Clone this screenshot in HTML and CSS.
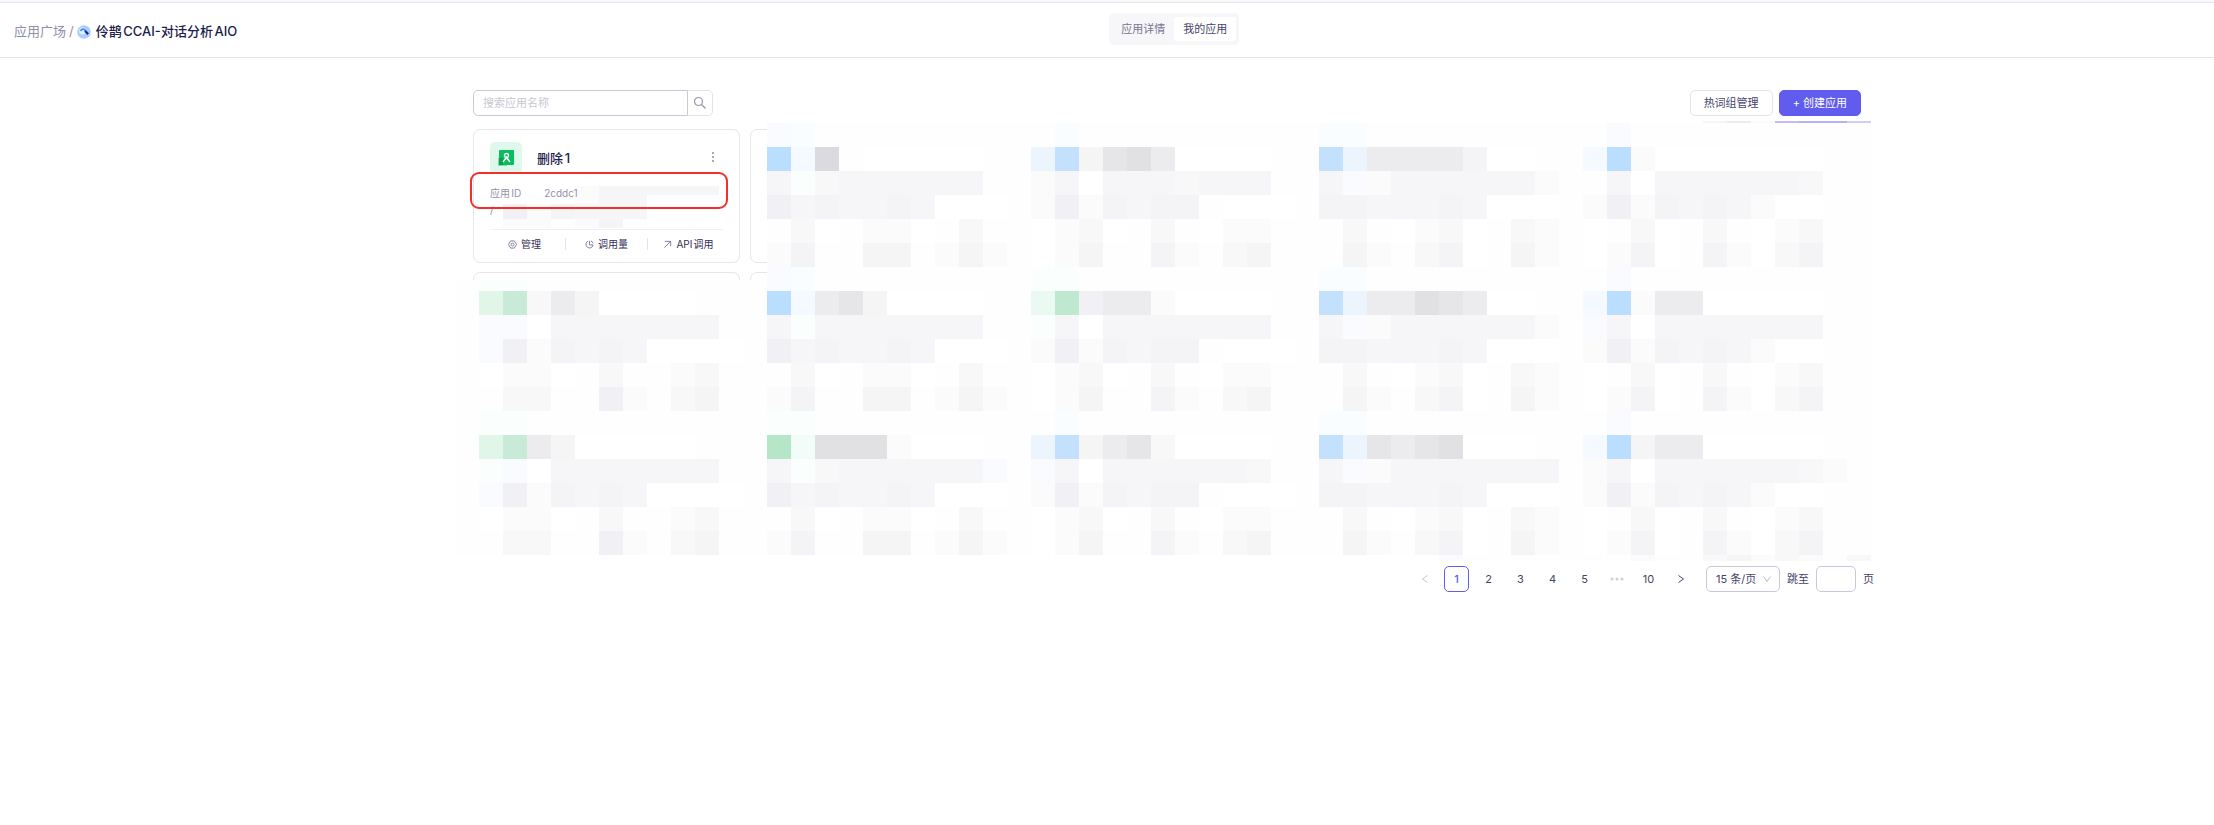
FILE: index.html
```html
<!DOCTYPE html>
<html lang="zh-CN">
<head>
<meta charset="utf-8">
<title>伶鹊CCAI-对话分析AIO</title>
<link rel="stylesheet" href="styles.css">
</head>
<body>
<header class="topbar">
  <nav class="crumbs">
    <a class="crumb-link" href="#">应用广场</a><span class="crumb-sep">/</span>
    <svg class="logo" viewBox="0 0 14 14" aria-hidden="true"><circle cx="7" cy="7" r="6.8" fill="#a9ceff"/><circle cx="5.6" cy="6" r="3.4" fill="#e4f1ff"/><path d="M3.600 6C5 3.200 8 4 8.600 6.200L11.200 8.600" fill="none" stroke="#3f8bf8" stroke-width="1.800"/><path d="M8 6L11.200 9.200" stroke="#142f86" stroke-width="2"/></svg>
    <span class="crumb-current">伶鹊CCAI-对话分析AIO</span>
  </nav>
  <div class="tabs">
    <button class="tab" type="button">应用详情</button>
    <button class="tab tab-active" type="button">我的应用</button>
  </div>
</header>
<main class="page">
  <div class="toolbar">
    <form class="search">
      <input class="search-input" type="text" placeholder="搜索应用名称" aria-label="搜索应用名称">
      <button class="search-button" type="button" aria-label="搜索"><svg class="icon-search" viewBox="0 0 14 14"><circle cx="5.500" cy="5.500" r="4" /><path d="M8.500 8.500L12.500 12.500"/></svg></button>
    </form>
    <div class="actions">
      <button class="button" type="button">热词组管理</button>
      <button class="button button-primary" type="button">+ 创建应用</button>
    </div>
  </div>
  <section class="board">
    <div class="cards">
      <article class="card">
        <div class="card-head">
          <svg class="app-icon" viewBox="0 0 32 32" aria-hidden="true"><rect width="32" height="32" rx="5" fill="#dff8ec"/><rect x="8" y="16" width="9" height="8" fill="#80dfac"/><rect x="9" y="8" width="15" height="15" rx="1" fill="#08bd5b"/><path d="M9 16h4v7H9z" fill="#0b9f50"/><circle cx="16.500" cy="13.500" r="2" fill="none" stroke="#fff" stroke-width="1.400"/><path d="M13 20L16.500 15.500L20 20M16.500 15.500V17" fill="none" stroke="#fff" stroke-width="1.400"/></svg>
          <h2 class="card-title">删除1</h2>
          <button class="more" type="button" aria-label="更多"><svg class="icon-more" viewBox="0 0 4 12"><path d="M1 1h2v2H1zM1 5h2v2H1zM1 9h2v2H1z"/></svg></button>
        </div>
        <div class="card-id"><span class="id-label">应用ID</span><span>2cddc1</span></div>
        <div class="card-note">/</div>
        <div class="card-actions">
          <button class="card-action card-action-first" type="button"><svg class="icon" viewBox="0 0 10 10"><path d="M3 1h4L9.500 5L7 9H3L.5 5z"/><circle cx="5" cy="5" r="1.600"/></svg>管理</button>
          <button class="card-action card-action-mid" type="button"><svg class="icon" viewBox="0 0 10 10"><path d="M3.500 1.200A4 4 0 1 0 9 5.500H5V1M6.500 1A4 4 0 0 1 9 3.800"/></svg>调用量</button>
          <button class="card-action card-action-last" type="button"><svg class="icon" viewBox="0 0 10 10"><path d="M1.500 8.500L8.500 1.500M2 1.500H8.500V7"/></svg>API调用</button>
        </div>
      </article>
      <article class="card"></article>
      <article class="card"></article>
      <article class="card"></article>
    </div>
    <div class="mosaic" id="mosaic" aria-hidden="true"></div>
    <div class="id-mask" id="id-mask" aria-hidden="true"></div>
    <div class="highlight" aria-hidden="true"></div>
  </section>
  <nav class="pager" aria-label="分页">
    <button class="page-button page-prev" type="button" aria-label="上一页"><svg class="icon" viewBox="0 0 10 10"><path d="M7.500 1.500L2.500 5L7.500 8.500"/></svg></button>
    <button class="page-button page-current" type="button">1</button>
    <button class="page-button" type="button">2</button>
    <button class="page-button" type="button">3</button>
    <button class="page-button" type="button">4</button>
    <button class="page-button" type="button">5</button>
    <span class="page-button"><svg class="icon-dots" viewBox="0 0 14 4"><circle cx="2" cy="2" r="1.500"/><circle cx="7" cy="2" r="1.500"/><circle cx="12" cy="2" r="1.500"/></svg></span>
    <button class="page-button" type="button">10</button>
    <button class="page-button" type="button" aria-label="下一页"><svg class="icon" viewBox="0 0 10 10"><path d="M2.500 1.500L7.500 5L2.500 8.500"/></svg></button>
    <div class="size">
      <select class="size-select" aria-label="每页条数"><option>15 条/页</option></select>
      <svg class="icon size-arrow" viewBox="0 0 10 10"><path d="M1.500 2.500L5 7.500L8.500 2.500"/></svg>
    </div>
    <label class="jump">跳至<input class="jump-input" type="text">页</label>
  </nav>
</main>
<script src="mosaic.js"></script>
</body>
</html>
```
FILE: styles.css
```css
* { box-sizing: border-box; }
body {
  margin: 0;
  background: #fff;
  color: #46436a;
  font: 11px/16px Inter, "Noto Sans CJK SC", sans-serif;
  text-autospace: normal;
}
button, input, select { margin: 0; padding: 0; border: 0; background: none; color: inherit; font: inherit; }
svg { display: block; flex: none; }
.icon { width: 10px; height: 10px; fill: none; stroke: currentColor; stroke-width: 1; }

.topbar {
  display: grid;
  grid-template-columns: 114fr auto 100fr;
  align-items: center;
  height: 58px;
  padding: 0 14px;
  border-top: 2px solid #f7f8fc;
  border-bottom: 1px solid #e3e4ea;
  box-shadow: inset 0 1px #e5e6ee;
}
.crumbs { display: flex; align-items: center; padding-top: 2px; font-size: 13px; line-height: 20px; }
.crumb-link { color: #918fa8; text-decoration: none; }
.crumb-sep { margin: 0 3px; color: #918fa8; }
.logo { width: 14px; height: 14px; margin: 2px 5px 0 0; }
.crumb-current { color: #201c4c; font-weight: 500; }
.tabs {
  display: flex;
  margin-bottom: 2px;
  padding: 4px 3px;
  border-radius: 5px;
  background: #f7f7fa;
}
.tab { height: 24px; padding: 0 9px; color: #77748f; }
.tab-active { border-radius: 3px; background: #fff; color: #46436a; }

.page { padding: 32px 340px 40px 473px; }
.toolbar { display: flex; justify-content: space-between; padding-right: 13px; }
.search { display: flex; height: 26px; }
.search-input { width: 215px; padding: 0 9px; border: 1px solid #c9c7db; border-radius: 5px 0 0 5px; }
.search-input::placeholder { color: #c8c7d1; }
.search-button {
  display: flex;
  align-items: center;
  justify-content: center;
  width: 25px;
  border: 1px solid #e4e3ec;
  border-left: 0;
  border-radius: 0 5px 5px 0;
}
.icon-search { width: 14px; height: 14px; fill: none; stroke: #9694aa; stroke-width: 1.2; }
.actions { display: flex; gap: 6px; }
.button { height: 26px; padding: 0 13px; border: 1px solid #e4e3ec; border-radius: 5px; }
.button-primary { border-color: #615ced; background: #615ced; color: #fff; }

.board { position: relative; height: 432px; margin-top: 13px; }
.cards { display: grid; grid-template-columns: repeat(2, 267px); gap: 9px 10px; }
.card { height: 134px; padding: 12px 16px 0; border: 1px solid #e6e5ee; border-radius: 7px; }
.card-head { display: flex; align-items: center; height: 32px; }
.app-icon { width: 32px; height: 32px; }
.card-title { flex: 1; margin: 0 0 0 15px; color: #201c4c; font-size: 13px; font-weight: 500; line-height: 20px; }
.more { padding: 0 8px 2px; }
.icon-more { width: 4px; height: 12px; fill: #aaa8ba; }
.card-id {
  position: relative;
  z-index: 1;
  display: flex;
  gap: 23px;
  margin-top: 11px;
  color: #9391ac;
  font-size: 10px;
}
.card-note { height: 18px; padding-top: 1px; color: #9391ac; font-size: 10px; }
.card-actions {
  display: grid;
  grid-template-columns: 75px 1fr 75px;
  margin-top: 10px;
  padding-top: 8px;
  border-top: 1px solid #f0f0f4;
}
.card-action {
  display: flex;
  align-items: center;
  justify-content: center;
  gap: 4px;
  height: 12px;
  color: #353158;
  font-size: 10px;
  white-space: nowrap;
}
.card-action .icon { width: 9px; height: 9px; color: #77748f; }
.card-action-first { padding-right: 6px; }
.card-action-mid { border: solid #e4e3ec; border-width: 0 1px; }
.card-action-last { padding-left: 6px; }

.mosaic { position: absolute; top: -8px; left: -18px; }
.mosaic-row { display: flex; }
.cell { flex: none; width: 24px; }
.id-mask { position: absolute; top: 57px; left: 6px; }
.highlight {
  position: absolute;
  z-index: 2;
  top: 43px;
  left: -3px;
  width: 258px;
  height: 37px;
  border: 2px solid #f22f28;
  border-radius: 9px;
}

.pager { display: flex; align-items: center; justify-content: flex-end; gap: 7px; margin-top: 5px; }
.page-button { display: flex; align-items: center; justify-content: center; width: 25px; height: 26px; border-radius: 5px; }
.page-current { border: 1px solid #615ced; color: #615ced; font-weight: 500; }
.page-prev { color: #c8c7d1; }
.icon-dots { width: 14px; height: 4px; fill: #cfceda; }
.size { position: relative; width: 74px; margin-left: 6px; }
.size-select { width: 100%; height: 26px; padding: 0 9px; border: 1px solid #c9c7db; border-radius: 5px; appearance: none; }
.size-arrow { position: absolute; top: 8px; right: 8px; color: #b9b7c8; }
.jump { display: flex; align-items: center; gap: 7px; }
.jump-input { width: 40px; height: 26px; padding: 0 6px; border: 1px solid #c9c7db; border-radius: 5px; }
```
FILE: mosaic.js
```js
// Colour of each cell code; a space leaves the cell clear.
const palette = {
  '.': '#fefefe', w: '#ffffff', a: '#fbfbfb', b: '#f8f8f8', c: '#f5f5f5',
  d: '#f4f4f7', e: '#f6f6f9', f: '#f1f1f5', g: '#ececee', h: '#e6e6e8',
  i: '#e1e1e3', j: '#dadadf', B: '#badefd', C: '#c3e1fc', D: '#ecf5fe',
  E: '#f4faff', F: '#f9fdff', L: '#fafbff', G: '#b5e6c8', H: '#bfe8d1',
  I: '#c8ebd8', J: '#e1f5e9', K: '#eafaf2', M: '#f2fcf8', N: '#fafefc',
  p: '#bfbcf6', q: '#b5b1f5', r: '#d0cef8'
};
const blank = ' '.repeat(13);
const foot = [
  ['.waaw.b..ab..', '.bw.aaw.b..', 'wabw.b.waa..', '.b.wabw.ba.', 'w.bw.b.wab..'],
  ['..bb..fa.bc..', 'ad..cc.aca.', 'wac..da.bc..', '.ca.bdw.ca.', 'wadw.dawbd..']
];
const second = ['.Lfadedewwww.', 'fedeedewww.', 'afadedd.www.', 'ddeeedewww.', 'afadedeaww..'];
// Each entry: [row height, cells]
const rows = [
  [2, ' '.repeat(52) + 'cga' + 'pqqr'],
  [24, [blank, 'LF.........', '.F..........', 'FF.........', '.L..........']],
  [24, [blank, 'BEj.wwwww..', 'DCchigwwww..', 'CDggggdww..', 'EBawwwwwww..']],
  [24, [blank, 'eNbeeeeee..', 'aeweeebeee..', 'eLaeeeeeea.', '.eweeeeeeb..']],
  [24, [blank, ...second.slice(1)]],
  [24, [blank, ...foot[0].slice(1)]],
  [24, [blank, ...foot[1].slice(1)]],
  [13, [blank, 'LF.........', 'NN..........', 'FF.........', '.L..........']],
  [11, ['.NN..........', 'LF.........', 'NN..........', 'FF.........', '.L..........']],
  [24, ['.JIbgcwwww...', 'BEghcwwww..', 'KHfggawwww..', 'CDggihgww..', 'EBaggwwwww..']],
  [24, ['.LLweeeeeee..', 'eNeeeeeee..', 'Neweeeeeee..', 'eLaeeeeeea.', 'Leweeeeeee..']],
  [24, second],
  [24, foot[0]],
  [24, foot[1]],
  [24, ['.NN..........', 'NN.........', '.F..........', 'FF.........', '.L..........']],
  [24, ['.JIgcwwwww...', 'GMiiiawww..', 'DCcghbwwww..', 'CDhghiwww..', 'EBcggwwwww..']],
  [24, ['.NLweeeeeee..', 'eNbeeeeeeL.', 'Leweeeeeeb..', 'eLaeeeeeee.', 'aeweeeeeeba.']],
  [24, second],
  [24, foot[0]],
  [24, foot[1]],
  [6, ' '.repeat(41) + 'L.......a..bcaba.b']
];

function draw(host, list) {
  for (const [height, cells] of list) {
    const row = document.createElement('div');
    row.className = 'mosaic-row';
    row.style.height = height + 'px';
    for (const code of [].concat(cells).join('')) {
      const cell = document.createElement('span');
      cell.className = 'cell';
      if (palette[code]) cell.style.background = palette[code];
      row.append(cell);
    }
    host.append(row);
  }
}
draw(document.getElementById('mosaic'), rows);
draw(document.getElementById('id-mask'), [
  [9, '    aeeeee'],
  [9, '    aee'],
  [15, ' fadeee'],
  [9, ' aa.ac.']
]);
```
